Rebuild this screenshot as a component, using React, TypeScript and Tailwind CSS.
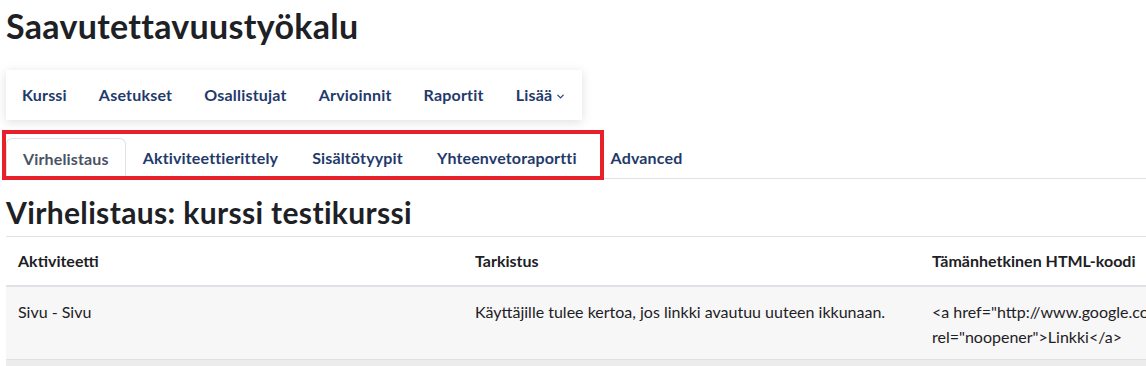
import { ChevronDown } from "lucide-react";

const NAV = ["Kurssi", "Asetukset", "Osallistujat", "Arvioinnit", "Raportit"];
const TABS = ["Aktiviteettierittely", "Sisältötyypit", "Yhteenvetoraportti", "Advanced"];

export default function App() {
  return (
    <div
      className="relative w-[1146px] h-[366px] overflow-hidden bg-white text-[#1d2125]"
      style={{ fontFamily: "Lato, 'Open Sans', sans-serif" }}
    >
      <div className="pl-[6px]">
        {/* Page title */}
        <h1 className="pt-[5px] text-[34px] leading-[41px] font-bold tracking-[0.3px]">Saavutettavuustyökalu</h1>

        {/* Secondary navigation */}
        <div className="mt-[24px] w-fit h-[50px] flex items-center bg-white shadow-[0_2px_10px_rgba(0,0,0,0.13)]">
          {NAV.map((item) => (
            <span key={item} className="px-4 text-[16px] font-bold tracking-[0.2px] text-[#1f3a6b]">
              {item}
            </span>
          ))}
          <span className="px-4 flex items-center gap-[3px] text-[16px] font-bold tracking-[0.2px] text-[#1f3a6b]">
            Lisää
            <ChevronDown className="w-[11px] h-[11px] mt-[2px]" strokeWidth={2.5} />
          </span>
        </div>

        {/* Tabs */}
        <div className="mt-[17px] flex items-end border-b border-[#dee2e6]">
          <span className="h-[41px] flex items-center px-[16px] border border-b-0 border-[#dee2e6] rounded-t-[6px] bg-white text-[16px] font-bold tracking-[0.15px] text-[#4a5363] mb-[-1px]">
            Virhelistaus
          </span>
          {TABS.map((tab) => (
            <span key={tab} className="h-[41px] flex items-center px-[17px] text-[16px] font-bold tracking-[0.15px] text-[#1f3a6b]">
              {tab}
            </span>
          ))}
        </div>

        {/* Heading */}
        <h2 className="mt-[15px] text-[30px] leading-[36px] font-bold tracking-[0.35px]">Virhelistaus: kurssi testikurssi</h2>

        {/* Table */}
        <table className="mt-[6px] w-[1371px] table-fixed border-collapse text-[16px]">
          <thead>
            <tr className="border-t border-[#dee2e6] border-b-2 border-b-[#dee2e6]">
              <th className="w-[457px] h-[49px] px-3 text-left font-bold">Aktiviteetti</th>
              <th className="w-[457px] px-3 text-left font-bold">Tarkistus</th>
              <th className="w-[457px] px-3 text-left font-bold">Tämänhetkinen HTML-koodi</th>
            </tr>
          </thead>
          <tbody>
            <tr className="bg-[#f7f7f7] border-b border-[#dee2e6] align-top">
              <td className="px-3 pt-[12px] pb-[10px] leading-[25px]">Sivu - Sivu</td>
              <td className="px-3 pt-[12px] pb-[10px] leading-[25px]">Käyttäjille tulee kertoa, jos linkki avautuu uuteen ikkunaan.</td>
              <td className="px-3 pt-[12px] pb-[10px] leading-[25px] whitespace-nowrap">
                {'<a href="http://www.google.com" target="_blank"'}
                <br />
                {'rel="noopener">Linkki</a>'}
              </td>
            </tr>
            <tr className="bg-[#ececec]">
              <td className="h-[40px]" />
              <td />
              <td />
            </tr>
          </tbody>
        </table>
      </div>

      {/* Red highlight annotation */}
      <div className="absolute left-[2px] top-[130px] w-[602px] h-[50px] border-4 border-[#e8202a] pointer-events-none" />
    </div>
  );
}
